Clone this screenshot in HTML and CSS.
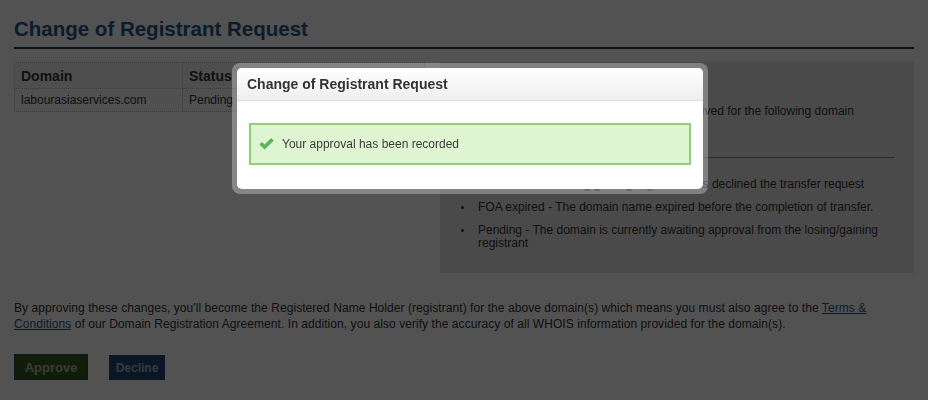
FILE: index.html
```html
<!DOCTYPE html>
<html lang="en">
<head>
<meta charset="utf-8">
<title>Change of Registrant Request</title>
<link rel="stylesheet" href="styles.css">
</head>
<body>
<div class="page">
  <h1 class="page-title">Change of Registrant Request</h1>
  <div class="columns">
    <div class="left-col">
      <table class="domains">
        <thead>
          <tr><th class="col-domain">Domain</th><th>Status</th></tr>
        </thead>
        <tbody>
          <tr><td>labourasiaservices.com</td><td>Pending</td></tr>
        </tbody>
      </table>
    </div>
    <div class="info-panel">
      <h3 class="info-title">Request details</h3>
      <p class="info-text">A Change of Registrant request has been received for the following domain name(s).</p>
      <hr class="info-rule">
      <ul class="status-list">
        <li>Declined - The losing/gaining registrant has declined the transfer request</li>
        <li>FOA expired - The domain name expired before the completion of transfer.</li>
        <li>Pending - The domain is currently awaiting approval from the losing/gaining registrant</li>
      </ul>
    </div>
  </div>
  <p class="agreement">By approving these changes, you'll become the Registered Name Holder (registrant) for the above domain(s) which means you must also agree to the <a href="#" class="link">Terms &amp; Conditions</a> of our Domain Registration Agreement. In addition, you also verify the accuracy of all WHOIS information provided for the domain(s).</p>
  <div class="actions">
    <button class="btn btn-approve">Approve</button>
    <button class="btn btn-decline">Decline</button>
  </div>
</div>

<div class="backdrop"></div>

<div class="dialog">
  <div class="dialog-inner">
    <div class="dialog-header">Change of Registrant Request</div>
    <div class="dialog-body">
      <div class="alert-success">
        <svg class="check" width="15" height="12" viewBox="0 0 15 12" aria-hidden="true">
          <path d="M0.8 6.4 L3 4.4 L5.6 6.9 L12.2 0.6 L14.3 2.7 L5.6 11.1 Z" fill="#5fb55a" stroke="#3f9a3c" stroke-width="0.6" stroke-linejoin="round"/>
        </svg>
        <span>Your approval has been recorded</span>
      </div>
    </div>
  </div>
</div>
</body>
</html>
```

FILE: styles.css
```css
html, body {
  margin: 0;
  padding: 0;
  background: #ffffff;
  font-family: "Liberation Sans", Arial, sans-serif;
  color: #333333;
}

.page {
  width: 900px;
  padding: 0 14px;
}

.page-title {
  margin: 0;
  padding-top: 16px;
  padding-bottom: 5px;
  font-size: 20.5px;
  line-height: 26px;
  font-weight: bold;
  color: #29568a;
  border-bottom: 2px solid #153c5e;
}

.columns {
  display: flex;
  gap: 15px;
  margin-top: 13px;
  align-items: flex-start;
}

.left-col {
  width: 411px;
}

.domains {
  width: 100%;
  border-collapse: collapse;
  font-size: 12px;
  color: #333;
}

.domains th {
  text-align: left;
  font-size: 14px;
  font-weight: bold;
  background: #f3f3f3;
  height: 25px;
  padding: 0 6px;
  border: 1px dotted #bbbbbb;
}

.domains .col-domain {
  width: 155px;
}

.domains td {
  height: 22px;
  padding: 0 6px;
  border: 1px dotted #bbbbbb;
  background: #f7f7f7;
}

.info-panel {
  width: 474px;
  box-sizing: border-box;
  background: #e6e6e6;
  padding: 12px 19px 13px 15px;
  font-size: 12px;
  color: #333;
}

.info-title {
  margin: 0 0 11px;
  font-size: 14px;
  line-height: 18px;
}

.info-text {
  margin: 0;
  line-height: 16px;
}

.info-rule {
  margin: 22px 0 0;
  border: 0;
  border-top: 1px solid #8a8a8a;
  height: 0;
}

.status-list {
  list-style: none;
  margin: 20px 0 0;
  padding-left: 23px;
}

.status-list li {
  position: relative;
  line-height: 13px;
  margin-bottom: 10px;
}

.status-list li::before {
  content: "";
  position: absolute;
  left: -17px;
  top: 5px;
  width: 3px;
  height: 3px;
  border-radius: 50%;
  background: #333;
}

.agreement {
  margin: 27px 0 0;
  font-size: 12px;
  line-height: 16px;
  letter-spacing: 0.06px;
  color: #333;
}

.link {
  color: #2a5a8a;
  text-decoration: underline;
}

.actions {
  display: flex;
  align-items: flex-end;
  gap: 21px;
  margin-top: 22px;
}

.btn {
  font-family: "Liberation Sans", Arial, sans-serif;
  font-weight: bold;
  font-size: 12px;
  border: 1px solid #1f4a75;
  padding: 0;
  cursor: pointer;
}

.btn-approve {
  width: 74px;
  height: 26px;
  background: #335a1a;
  color: #aebfa2;
  font-size: 13px;
}

.btn-decline {
  width: 56px;
  height: 25px;
  background: #1d4773;
  color: #a8b4c2;
}

.backdrop {
  position: fixed;
  inset: 0;
  background: rgba(0, 0, 0, 0.68);
}

.dialog {
  position: absolute;
  left: 232px;
  top: 63px;
  width: 466px;
  padding: 5px;
  border-radius: 8px;
  background: rgba(255, 255, 255, 0.3);
}

.dialog-inner {
  background: #ffffff;
  border-radius: 5px;
  overflow: hidden;
}

.dialog-header {
  height: 32px;
  line-height: 32px;
  padding-left: 10px;
  font-size: 14px;
  font-weight: bold;
  color: #333333;
  background: linear-gradient(#ffffff, #eeeeee);
  border-bottom: 1px solid #dcdcdc;
}

.dialog-body {
  padding: 22px 12px 24px;
}

.alert-success {
  display: flex;
  align-items: center;
  gap: 8px;
  height: 38px;
  padding-left: 8px;
  background: #dff5d1;
  border: 2px solid #93cf78;
  font-size: 12px;
  color: #3b3b3b;
}

.check {
  display: block;
  flex: none;
}
```
